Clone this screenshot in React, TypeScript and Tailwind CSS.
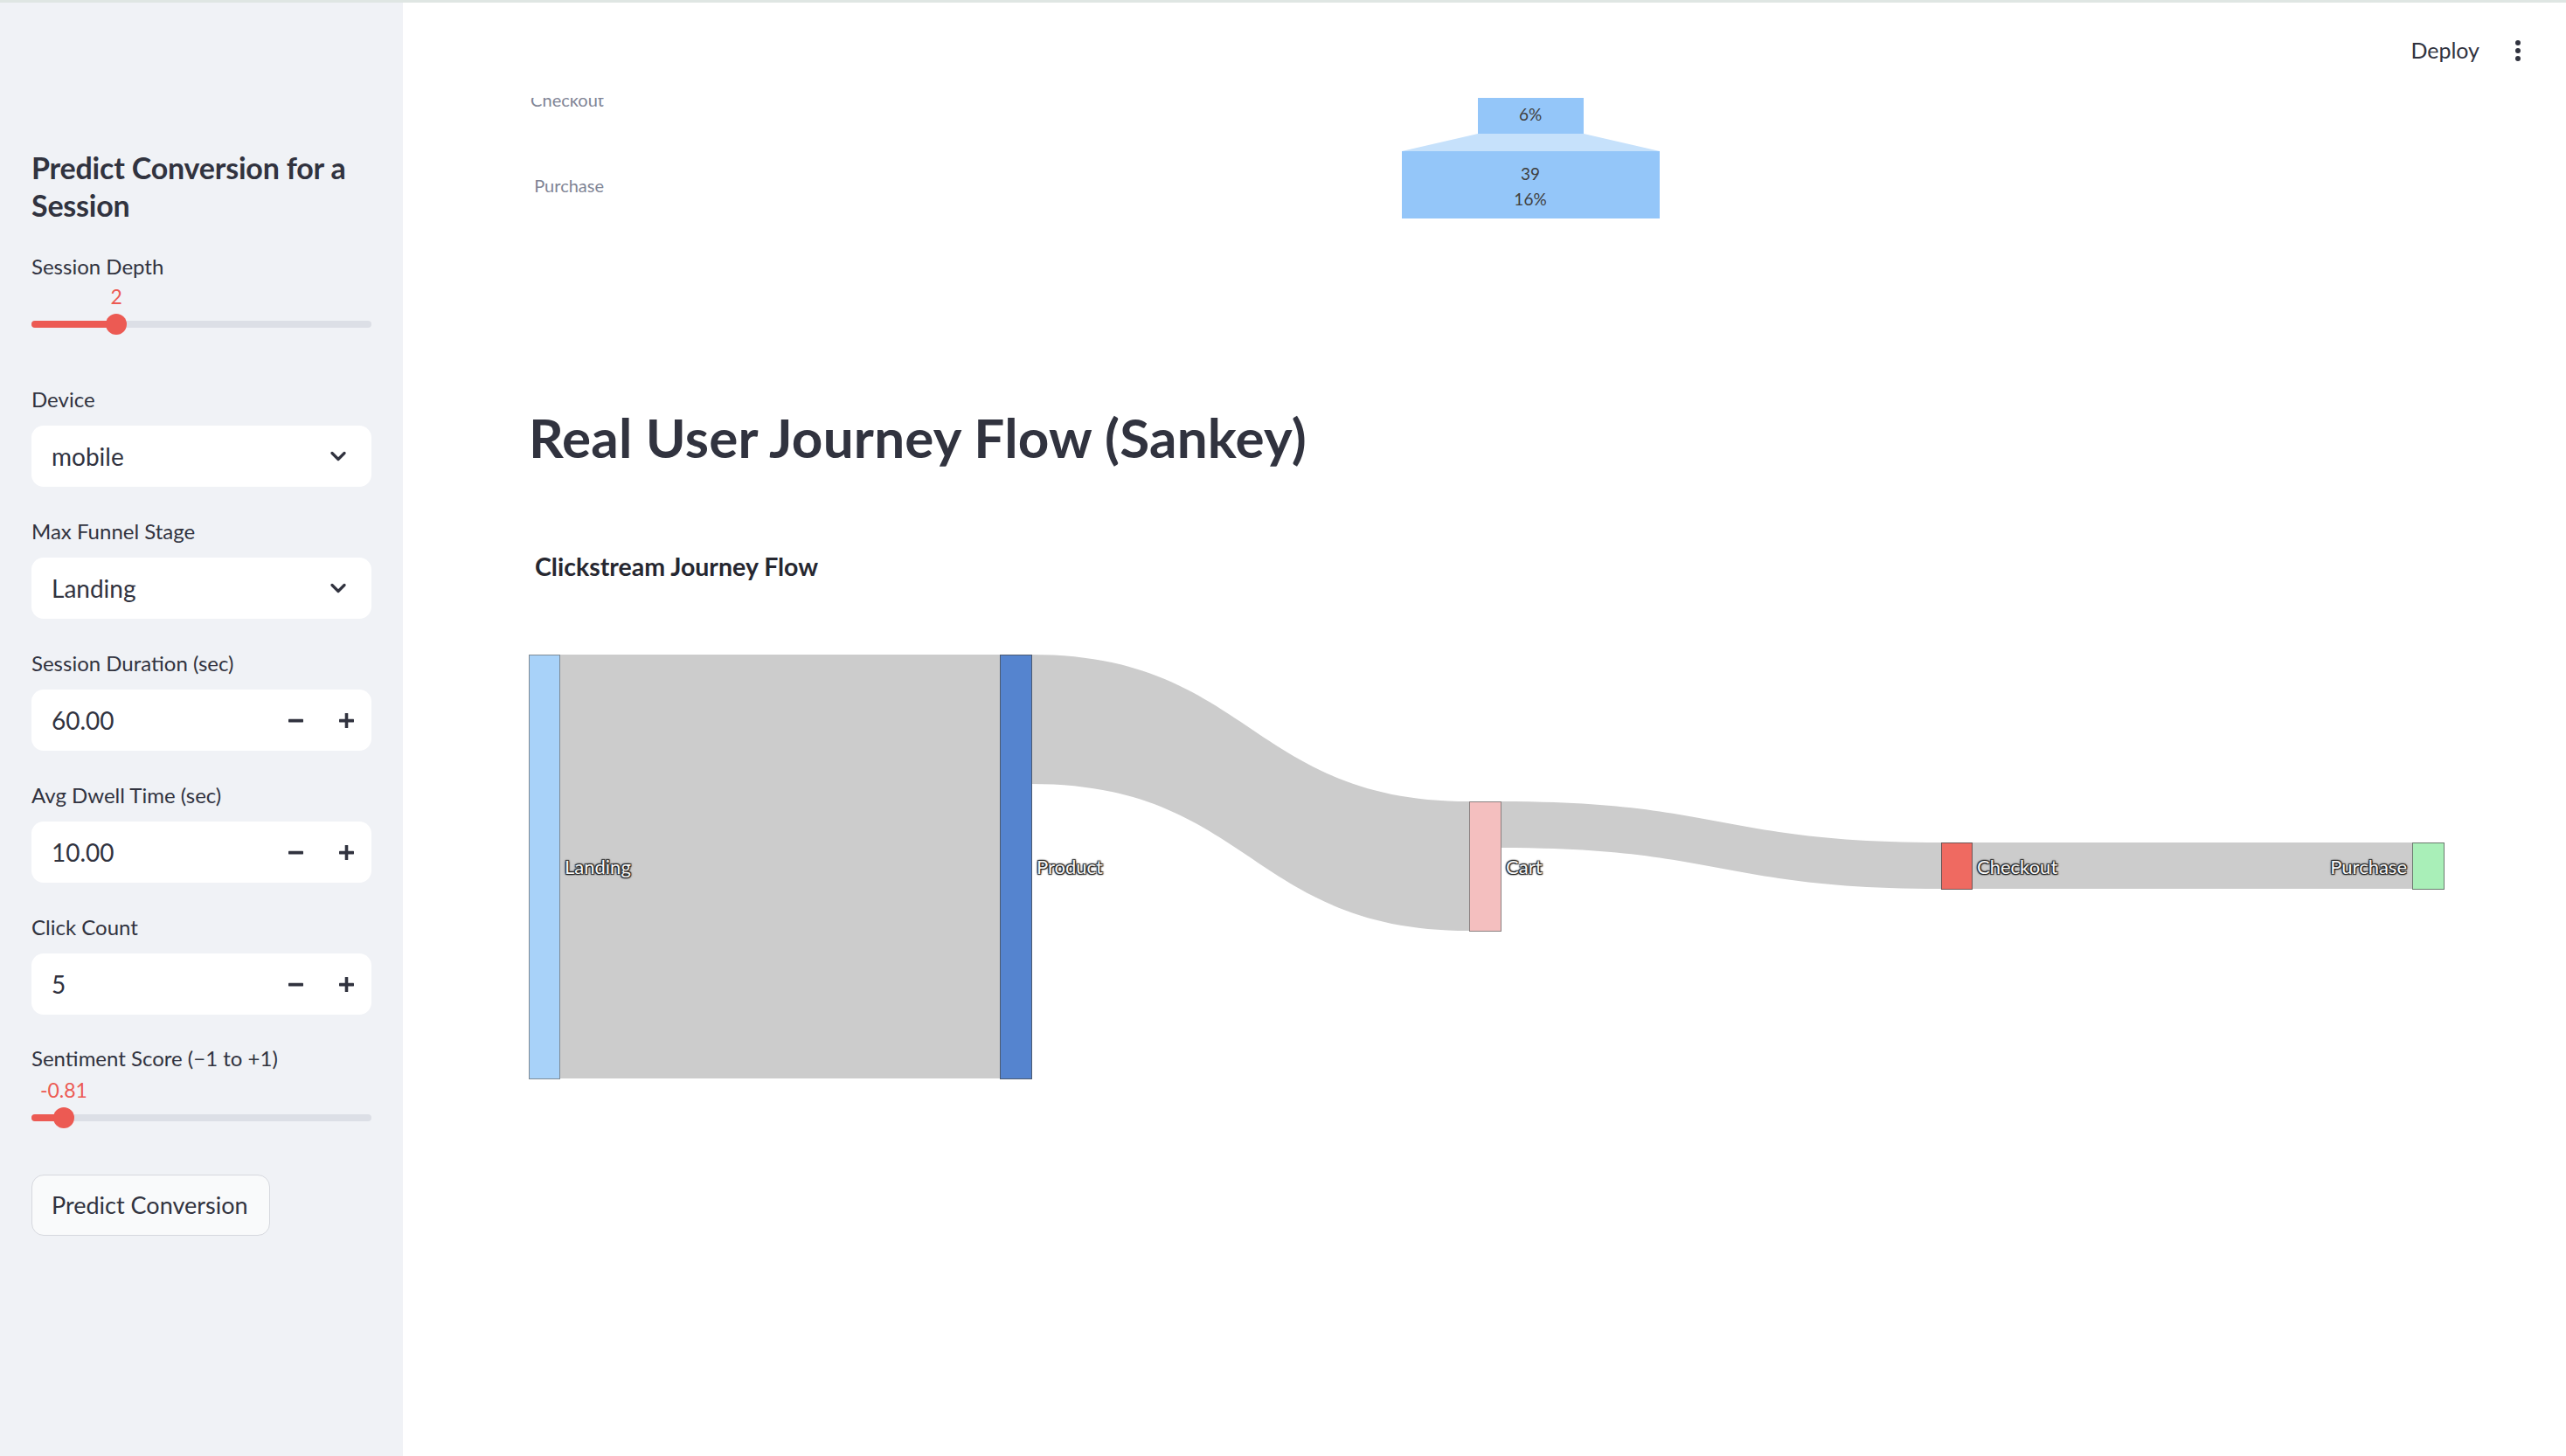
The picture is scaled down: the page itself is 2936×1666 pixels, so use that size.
import React from "react";

function Chevron() {
  return (
    <svg width="18" height="12" viewBox="0 0 18 12" fill="none">
      <path d="M2 2.5 L9 9.5 L16 2.5" stroke="#31333f" strokeWidth="3.2" strokeLinecap="round" strokeLinejoin="round" />
    </svg>
  );
}

function Minus() {
  return (
    <svg width="17" height="17" viewBox="0 0 17 17">
      <rect x="0" y="6.8" width="17" height="3.6" rx="0.6" fill="#31333f" />
    </svg>
  );
}

function Plus() {
  return (
    <svg width="17" height="17" viewBox="0 0 17 17">
      <rect x="0" y="6.8" width="17" height="3.6" rx="0.6" fill="#31333f" />
      <rect x="6.7" y="0" width="3.6" height="17" rx="0.6" fill="#31333f" />
    </svg>
  );
}

function FieldLabel({ text, className }: { text: string; className: string }) {
  return <div className={"h-[36px] text-[24px] leading-[36px] text-[#31333f] " + className}>{text}</div>;
}

function SelectBox({ value }: { value: string }) {
  return (
    <div className="mt-[12px] flex h-[70px] items-center justify-between rounded-[14px] bg-white pl-[23px] pr-[29px]">
      <span className="text-[28px] text-[#31333f]">{value}</span>
      <Chevron />
    </div>
  );
}

function NumberBox({ value }: { value: string }) {
  return (
    <div className="mt-[12px] flex h-[70px] items-center rounded-[14px] bg-white pl-[23px]">
      <span className="flex-1 text-[28px] text-[#31333f]">{value}</span>
      <div className="flex h-full w-[58px] items-center justify-center">
        <Minus />
      </div>
      <div className="flex h-full w-[58px] items-center justify-center">
        <Plus />
      </div>
    </div>
  );
}

function Slider({ pct, value, valueClass }: { pct: number; value: string; valueClass: string }) {
  return (
    <div className="relative">
      <div className={"relative h-[28px] " + valueClass}>
        <span
          className="absolute top-0 -translate-x-1/2 text-[23px] leading-[28px] text-[#ec5a53]"
          style={{ left: `${pct}%` }}
        >
          {value}
        </span>
      </div>
      <div className="relative mt-[6px] flex h-[24px] items-center">
        <div className="h-[8px] w-full rounded-full bg-[#dcdfe6]" />
        <div
          className="absolute left-0 top-[8px] h-[8px] rounded-full bg-[#ec5a53]"
          style={{ width: `${pct}%` }}
        />
        <div
          className="absolute top-0 h-[24px] w-[24px] -translate-x-1/2 rounded-full bg-[#ec5a53]"
          style={{ left: `${pct}%` }}
        />
      </div>
    </div>
  );
}

function Sidebar() {
  return (
    <aside className="flex w-[461px] shrink-0 flex-col bg-[#f0f2f6] px-[36px] pt-[167px]">
      <h2 className="text-[34px] font-bold leading-[43px] tracking-[-0.2px] text-[#31333f]">
        Predict Conversion for a Session
      </h2>

      <FieldLabel text="Session Depth" className="mt-[31px]" />
      <Slider pct={25} value="2" valueClass="mt-[2px]" />

      <FieldLabel text="Device" className="mt-[56px]" />
      <SelectBox value="mobile" />

      <FieldLabel text="Max Funnel Stage" className="mt-[33px]" />
      <SelectBox value="Landing" />

      <FieldLabel text="Session Duration (sec)" className="mt-[33px]" />
      <NumberBox value="60.00" />

      <FieldLabel text="Avg Dwell Time (sec)" className="mt-[33px]" />
      <NumberBox value="10.00" />

      <FieldLabel text="Click Count" className="mt-[33px]" />
      <NumberBox value="5" />

      <FieldLabel text="Sentiment Score (−1 to +1)" className="mt-[32px]" />
      <Slider pct={9.5} value="-0.81" valueClass="mt-[4px]" />

      <div className="mt-[53px]">
        <button className="h-[70px] w-[273px] rounded-[14px] border-[1.5px] border-[#d6d8de] bg-[#f9fafb] pl-[22px] text-left text-[27px] text-[#31333f]">
          Predict Conversion
        </button>
      </div>
    </aside>
  );
}

function Funnel() {
  return (
    <svg width="2187" height="290" className="block">
      <text x="86" y="111" textAnchor="end" dominantBaseline="central" fontSize="20" fill="#808495">
        Checkout
      </text>
      <text x="86" y="209" textAnchor="end" dominantBaseline="central" fontSize="20" fill="#808495">
        Purchase
      </text>
      <rect x="1086" y="72" width="121" height="78" fill="#94c6f9" />
      <polygon points="1086,150 1207,150 1294,170 999,170" fill="#c6e1fb" />
      <rect x="999" y="170" width="295" height="77" fill="#94c6f9" />
      <text x="1146" y="99" textAnchor="middle" dominantBaseline="central" fontSize="19" fill="#404040">
        15
      </text>
      <text x="1146" y="127" textAnchor="middle" dominantBaseline="central" fontSize="19" fill="#404040">
        6%
      </text>
      <text x="1146" y="195" textAnchor="middle" dominantBaseline="central" fontSize="19" fill="#404040">
        39
      </text>
      <text x="1146" y="224" textAnchor="middle" dominantBaseline="central" fontSize="19" fill="#404040">
        16%
      </text>
    </svg>
  );
}

function Sankey() {
  const lbl =
    "fill-[#f7f7f7] [text-shadow:1px_1px_1px_#222,-1px_-1px_1px_#222,1px_-1px_1px_#222,-1px_1px_1px_#222,0_0_3px_#333]";
  return (
    <svg width="2200" height="560" className="mt-[32px] block">
      <rect x="35" y="49" width="504" height="485" fill="#cccccc" />
      <path d="M575,49 C825,49 825,217 1076,217 L1076,365 C825,365 825,197 575,197 Z" fill="#cccccc" />
      <path d="M1112,217 C1364,217 1364,264 1616,264 L1616,317 C1364,317 1364,270 1112,270 Z" fill="#cccccc" />
      <rect x="1651" y="264" width="504" height="53" fill="#cccccc" />
      <rect x="0.5" y="49.5" width="35" height="485" fill="#a8d2f9" stroke="#7f8b96" strokeWidth="1" />
      <rect x="539.5" y="49.5" width="36" height="485" fill="#5584cf" stroke="#4c5a70" strokeWidth="1" />
      <rect x="1076.5" y="217.5" width="36" height="148" fill="#f4bfbf" stroke="#8b8080" strokeWidth="1" />
      <rect x="1616.5" y="264.5" width="35" height="53" fill="#ef6a61" stroke="#6e5555" strokeWidth="1" />
      <rect x="2155.5" y="264.5" width="36" height="53" fill="#a9efb8" stroke="#6b7a6e" strokeWidth="1" />
      <text x="41" y="291" dominantBaseline="central" fontSize="22" className={lbl}>
        Landing
      </text>
      <text x="581" y="291" dominantBaseline="central" fontSize="22" className={lbl}>
        Product
      </text>
      <text x="1118" y="291" dominantBaseline="central" fontSize="22" className={lbl}>
        Cart
      </text>
      <text x="1657" y="291" dominantBaseline="central" fontSize="22" className={lbl}>
        Checkout
      </text>
      <text x="2149" y="291" textAnchor="end" dominantBaseline="central" fontSize="22" className={lbl}>
        Purchase
      </text>
    </svg>
  );
}

function Main() {
  return (
    <main className="relative flex-1 overflow-hidden bg-white">
      <div className="absolute left-0 right-0 top-0 z-10 h-[109px] bg-white">
        <div className="mt-[40px] flex h-[30px] items-center justify-end gap-[40px] pr-[51px]">
          <span className="text-[25px] text-[#31333f]">Deploy</span>
          <div className="flex w-[8px] flex-col items-center gap-[3px]">
            <span className="h-[6px] w-[6px] rounded-full bg-[#31333f]" />
            <span className="h-[6px] w-[6px] rounded-full bg-[#31333f]" />
            <span className="h-[6px] w-[6px] rounded-full bg-[#31333f]" />
          </div>
        </div>
      </div>
      <div className="flex flex-col px-[144px]">
        <Funnel />
        <h2 className="mt-[167px] h-[80px] text-[62px] font-bold leading-[80px] tracking-[0.2px] text-[#31333f]">
          Real User Journey Flow (Sankey)
        </h2>
        <div className="mt-[88px] h-[40px] pl-[7px] text-[28.5px] font-bold leading-[40px] text-[#262730]">
          Clickstream Journey Flow
        </div>
        <Sankey />
      </div>
    </main>
  );
}

export default function App() {
  return (
    <div className="flex h-[1666px] w-[2936px] flex-col overflow-hidden bg-white font-['Lato','Noto_Sans',sans-serif]">
      <div className="h-[3px] w-full shrink-0 bg-[#dfe6e3]" />
      <div className="flex min-h-0 flex-1">
        <Sidebar />
        <Main />
      </div>
    </div>
  );
}
